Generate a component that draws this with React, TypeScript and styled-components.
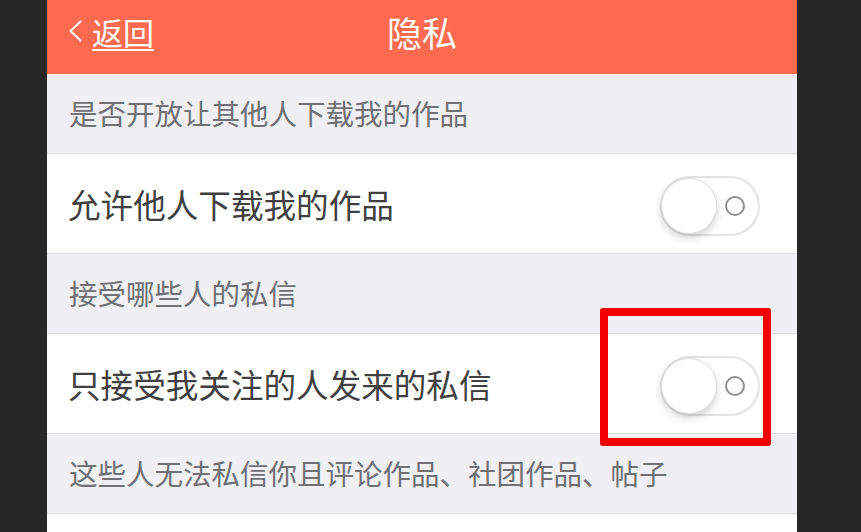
import React from "react";
import styled, { createGlobalStyle } from "styled-components";

const Global = createGlobalStyle`
  html, body { margin: 0; padding: 0; background: #272727; }
  body { font-family: "Noto Sans CJK SC", "Noto Sans", sans-serif; }
  * { box-sizing: border-box; }
`;

const Stage = styled.div`
  width: 861px;
  height: 532px;
  overflow: hidden;
  background: #272727;
  padding-left: 47px;
  position: relative;
`;

const Screen = styled.div`
  width: 750px;
  height: 532px;
  background: #ffffff;
  display: flex;
  flex-direction: column;
`;

const NavBar = styled.header`
  height: 74px;
  flex: none;
  background: #fe6a4f;
  display: grid;
  grid-template-columns: 1fr auto 1fr;
  align-items: center;
  color: #fff;
  padding-bottom: 12px;
`;

const Back = styled.div`
  display: flex;
  align-items: center;
  padding-left: 21px;
  gap: 9px;
  font-size: 31px;
  line-height: 1;
`;

const BackText = styled.span`
  text-decoration: underline;
  text-decoration-thickness: 2px;
  text-underline-offset: 4px;
`;

const Title = styled.h1`
  margin: 0;
  font-size: 35px;
  font-weight: 400;
  line-height: 1;
`;

const SectionHeader = styled.div`
  height: 80px;
  flex: none;
  background: #efeff4;
  border-bottom: 1px solid #dcdce0;
  display: flex;
  align-items: center;
  padding-left: 22px;
  font-size: 28.5px;
  color: #707075;
  padding-bottom: 2px;
`;

const Row = styled.div`
  height: 100px;
  flex: none;
  background: #fff;
  border-bottom: 1px solid #dcdce0;
  display: flex;
  align-items: center;
  justify-content: space-between;
  padding: 0 37px 0 21px;
  font-size: 32.6px;
  color: #404040;
`;

const Track = styled.div`
  width: 100px;
  height: 60px;
  border-radius: 30px;
  border: 2px solid #e3e3e3;
  background: #fff;
  position: relative;
  display: flex;
  align-items: center;
  justify-content: flex-end;
  padding-right: 13px;
  margin-top: 4px;
`;

const Knob = styled.div`
  position: absolute;
  left: -1px;
  top: 0px;
  width: 56px;
  height: 56px;
  border-radius: 50%;
  background: #fff;
  border: 1px solid #dedede;
  box-shadow: 0 4px 8px rgba(0, 0, 0, 0.18);
`;

const Ring = styled.div`
  width: 20px;
  height: 20px;
  border-radius: 50%;
  border: 2px solid #8f8f8f;
`;

const Highlight = styled.div`
  position: absolute;
  left: 600px;
  top: 308px;
  width: 171px;
  height: 138px;
  border: 8px solid #f40000;
  border-radius: 3px;
`;

const Toggle = () => (
  <Track>
    <Knob />
    <Ring />
  </Track>
);

export default function App() {
  return (
    <>
      <Global />
      <Stage>
        <Screen>
          <NavBar>
            <Back>
              <svg width="15" height="22" viewBox="0 0 15 22">
                <path d="M13 1 L2.5 11 L13 21" fill="none" stroke="#fff" strokeWidth="2" />
              </svg>
              <BackText>返回</BackText>
            </Back>
            <Title>隐私</Title>
            <div />
          </NavBar>
          <SectionHeader>是否开放让其他人下载我的作品</SectionHeader>
          <Row>
            <span>允许他人下载我的作品</span>
            <Toggle />
          </Row>
          <SectionHeader>接受哪些人的私信</SectionHeader>
          <Row>
            <span>只接受我关注的人发来的私信</span>
            <Toggle />
          </Row>
          <SectionHeader>这些人无法私信你且评论作品、社团作品、帖子</SectionHeader>
        </Screen>
        <Highlight />
      </Stage>
    </>
  );
}
